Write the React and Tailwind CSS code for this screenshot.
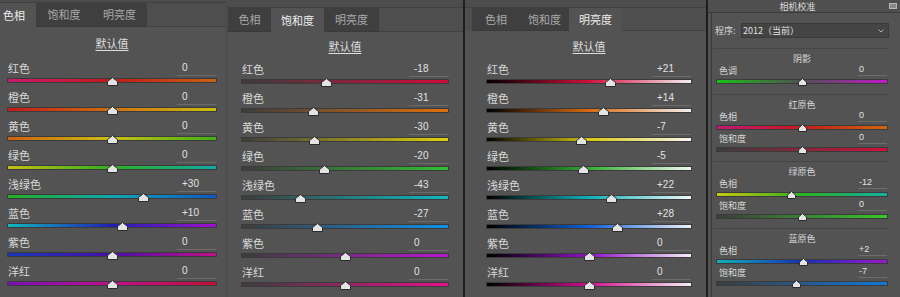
import React from "react";

const fmt = (v) => (v > 0 ? `+${v}` : `${v}`);

const hueRows = [
  ["红色", 0, "bg-[linear-gradient(to_right,#c8196e,#c41a1a,#c8620e)]"],
  ["橙色", 0, "bg-[linear-gradient(to_right,#c41a1a,#d0700e,#c8c010)]"],
  ["黄色", 0, "bg-[linear-gradient(to_right,#d0620e,#ccc010,#3cb014)]"],
  ["绿色", 0, "bg-[linear-gradient(to_right,#c8c010,#2cb020,#10a8a8)]"],
  ["浅绿色", 30, "bg-[linear-gradient(to_right,#20b020,#10a8b0,#1058c8)]"],
  ["蓝色", 10, "bg-[linear-gradient(to_right,#10b8c0,#2020b0,#a010d0)]"],
  ["紫色", 0, "bg-[linear-gradient(to_right,#1838b8,#4810a8,#c01088)]"],
  ["洋红", 0, "bg-[linear-gradient(to_right,#7810b8,#c0108c,#c01038)]"],
];

const satRows = [
  ["红色", -18, "bg-[linear-gradient(to_right,#3c3c3c,#d20a3c)]"],
  ["橙色", -31, "bg-[linear-gradient(to_right,#3c3c3c,#e0700c)]"],
  ["黄色", -30, "bg-[linear-gradient(to_right,#3c3c3c,#e0d00c)]"],
  ["绿色", -20, "bg-[linear-gradient(to_right,#3c3c3c,#30c030)]"],
  ["浅绿色", -43, "bg-[linear-gradient(to_right,#3c3c3c,#10b8c0)]"],
  ["蓝色", -27, "bg-[linear-gradient(to_right,#3c3c3c,#1090e8)]"],
  ["紫色", 0, "bg-[linear-gradient(to_right,#3c3c3c,#b818d0)]"],
  ["洋红", 0, "bg-[linear-gradient(to_right,#3c3c3c,#e8108c)]"],
];

const lumRows = [
  ["红色", 21, "bg-[linear-gradient(to_right,#000000,#d0103a,#f4eef2)]"],
  ["橙色", 14, "bg-[linear-gradient(to_right,#000000,#d86a10,#f4f0ec)]"],
  ["黄色", -7, "bg-[linear-gradient(to_right,#000000,#d8c810,#f8f8ee)]"],
  ["绿色", -5, "bg-[linear-gradient(to_right,#000000,#30b030,#eef8ee)]"],
  ["浅绿色", 22, "bg-[linear-gradient(to_right,#000000,#10b0b8,#eef8f8)]"],
  ["蓝色", 28, "bg-[linear-gradient(to_right,#000000,#1060d8,#eef2f8)]"],
  ["紫色", 0, "bg-[linear-gradient(to_right,#000000,#9010c8,#f6eef8)]"],
  ["洋红", 0, "bg-[linear-gradient(to_right,#000000,#d01090,#f8eef4)]"],
];

const calSections = [
  {
    title: "阴影",
    pb: "pb-[8px]",
    rows: [["色调", 0, "bg-[linear-gradient(to_right,#18c018,#505050,#c018c8)]"]],
  },
  {
    title: "红原色",
    pb: "pb-[7px]",
    rows: [
      ["色相", 0, "bg-[linear-gradient(to_right,#c0187a,#c41a1a,#d0680e)]"],
      ["饱和度", 0, "bg-[linear-gradient(to_right,#3c3c3c,#d0103a)]"],
    ],
  },
  {
    title: "绿原色",
    pb: "pb-[7px]",
    rows: [
      ["色相", -12, "bg-[linear-gradient(to_right,#c8c810,#30b020,#10b0a0)]"],
      ["饱和度", 0, "bg-[linear-gradient(to_right,#3c3c3c,#38c828)]"],
    ],
  },
  {
    title: "蓝原色",
    pb: "pb-[7px]",
    rows: [
      ["色相", 2, "bg-[linear-gradient(to_right,#10b0b8,#1830b8,#9c18c8)]"],
      ["饱和度", -7, "bg-[linear-gradient(to_right,#3c3c3c,#1078d8)]"],
    ],
  },
];

function Thumb({ value, small }) {
  const w = small ? 9 : 11;
  const h = small ? 8 : 9;
  return (
    <svg
      width={w}
      height={h}
      viewBox={`0 0 ${w} ${h}`}
      className="absolute top-[-2px]"
      style={{ left: `calc(${(value + 100) / 2}% - ${w / 2}px)` }}
    >
      <path
        d={`M${w / 2} 0.5 L${w - 0.5} ${h / 2} L${w - 0.5} ${h - 0.5} L0.5 ${h - 0.5} L0.5 ${h / 2} Z`}
        fill="#e4e4e4"
        stroke="#2c2c2c"
      />
    </svg>
  );
}

function Track({ value, grad, small }) {
  return (
    <div className={`relative h-[3px] ${grad} shadow-[0_0_0_1px_#3b3b3b]`}>
      <Thumb value={value} small={small} />
    </div>
  );
}

function Row({ label, value, grad }) {
  return (
    <div className="h-[29px] flex flex-col">
      <div className="h-[16px] flex items-center justify-between">
        <span className="text-[11px] leading-none text-[#d8d8d8]">{label}</span>
        <span className="w-[39px] h-[16px] pl-[5px] border-b border-[#6c6c6c] flex items-center font-['Liberation_Sans',sans-serif] text-[10px] text-[#e2e2e2]">
          {fmt(value)}
        </span>
      </div>
      <div className="pt-[3px]">
        <Track value={value} grad={grad} />
      </div>
    </div>
  );
}

const tabNames = ["色相", "饱和度", "明亮度"];

function AdjustPanel({ wrap, top, tabRow, tabs, active, head, body, rows }) {
  return (
    <div className={`${wrap} h-full flex flex-col bg-[#535353]`}>
      <div className={`${top} bg-[#4d4d4d] border-b border-[#404040]`} />
      <div className={`${tabRow} flex bg-[#4e4e4e]`}>
        {tabNames.map((t, i) => (
          <div
            key={t}
            className={`${tabs[i]} h-full flex items-center justify-center text-[11px] ${
              i === active
                ? "bg-[#535353] text-[#eeeeee]"
                : "bg-[#3f3f3f] text-[#a9a9a9] border-b border-[#3a3a3a]"
            }`}
          >
            {t}
          </div>
        ))}
        <div className="flex-1 border-b border-[#414141]" />
      </div>
      <div className={body}>
        <div className={`${head} flex items-center justify-center`}>
          <span className="text-[11px] underline underline-offset-2 text-[#dedede]">默认值</span>
        </div>
        {rows.map(([l, v, g]) => (
          <Row key={l} label={l} value={v} grad={g} />
        ))}
      </div>
    </div>
  );
}

function CalRow({ label, value, grad }) {
  return (
    <div className="h-[22px] flex flex-col">
      <div className="h-[12px] flex items-center justify-between pl-[2px]">
        <span className="text-[9px] leading-none text-[#d8d8d8]">{label}</span>
        <span className="w-[29px] h-[12px] pl-[1px] border-b border-[#6c6c6c] flex items-center font-['Liberation_Sans',sans-serif] text-[9px] text-[#e2e2e2]">
          {fmt(value)}
        </span>
      </div>
      <div className="h-[10px] flex flex-col justify-center">
        <Track value={value} grad={grad} small />
      </div>
    </div>
  );
}

function CalibrationPanel() {
  return (
    <div className="w-[192px] h-full flex flex-col bg-[#535353]">
      <div className="h-[13px] flex items-center border-b border-[#3c3c3c] bg-[#4f4f4f] relative">
        <span className="flex-1 text-center text-[9px] leading-none text-[#dcdcdc] pr-[13px]">相机校准</span>
        <svg width="8" height="6" viewBox="0 0 8 6" className="absolute right-[3px] top-[3px]">
          <rect x="0" y="0" width="8" height="6" fill="#b8b8b8" />
          <path d="M1 2h6M1 4h6" stroke="#5a5a5a" strokeWidth="1" />
        </svg>
      </div>
      <div className="flex-1 ml-[3px] mr-[11px] border-l border-[#3a3a3a] flex flex-col">
        <div className="h-[35px] flex items-center pl-[3px]">
          <span className="w-[26px] shrink-0 whitespace-nowrap text-[9px] text-[#d8d8d8]">程序:</span>
          <div className="flex-1 h-[15px] bg-[#444444] border border-[#3a3a3a] flex items-center justify-between pl-[1px] pr-[4px]">
            <span className="text-[9px] text-[#e0e0e0] whitespace-nowrap">2012（当前）</span>
            <svg width="6" height="4" viewBox="0 0 6 4">
              <path d="M0.5 0.5 L3 3 L5.5 0.5" fill="none" stroke="#b5b5b5" strokeWidth="1" />
            </svg>
          </div>
        </div>
        {calSections.map((s) => (
          <div key={s.title} className={`ml-[1px] border-t border-[#464646] pt-[5px] ${s.pb} pl-[4px] pr-[2px]`}>
            <div className="h-[10px] flex items-center justify-center text-[9px] text-[#d8d8d8]">
              {s.title}
            </div>
            {s.rows.map(([l, v, g]) => (
              <CalRow key={l} label={l} value={v} grad={g} />
            ))}
          </div>
        ))}
      </div>
    </div>
  );
}

export default function App() {
  return (
    <div className="w-[900px] h-[297px] flex overflow-hidden bg-[#535353] font-['Noto_Sans_CJK_SC','Noto_Sans',sans-serif]">
      <AdjustPanel
        wrap="w-[227px] border-r border-[#4a4a4a]"
        top="h-[3px]"
        tabRow="h-[24px]"
        tabs={["w-[44px] ml-[-8px]", "w-[56px]", "w-[55px]"]}
        active={0}
        head="h-[33px]"
        body="pl-[8px] pr-[10px]"
        rows={hueRows}
      />
      <AdjustPanel
        wrap="w-[236px]"
        top="h-[8px]"
        tabRow="h-[24px] pl-[1px]"
        tabs={["w-[43px]", "w-[53px]", "w-[55px]"]}
        active={1}
        head="h-[29px]"
        body="pl-[15px] pr-[15px]"
        rows={satRows}
      />
      <div className="w-[2px] h-full bg-[#1e1e1e]" />
      <AdjustPanel
        wrap="w-[241px]"
        top="h-[8px]"
        tabRow="h-[23px] pl-[7px]"
        tabs={["w-[48px]", "w-[49px]", "w-[53px]"]}
        active={2}
        head="h-[30px]"
        body="pl-[22px] pr-[15px]"
        rows={lumRows}
      />
      <div className="w-[2px] h-full bg-[#1e1e1e]" />
      <CalibrationPanel />
    </div>
  );
}
